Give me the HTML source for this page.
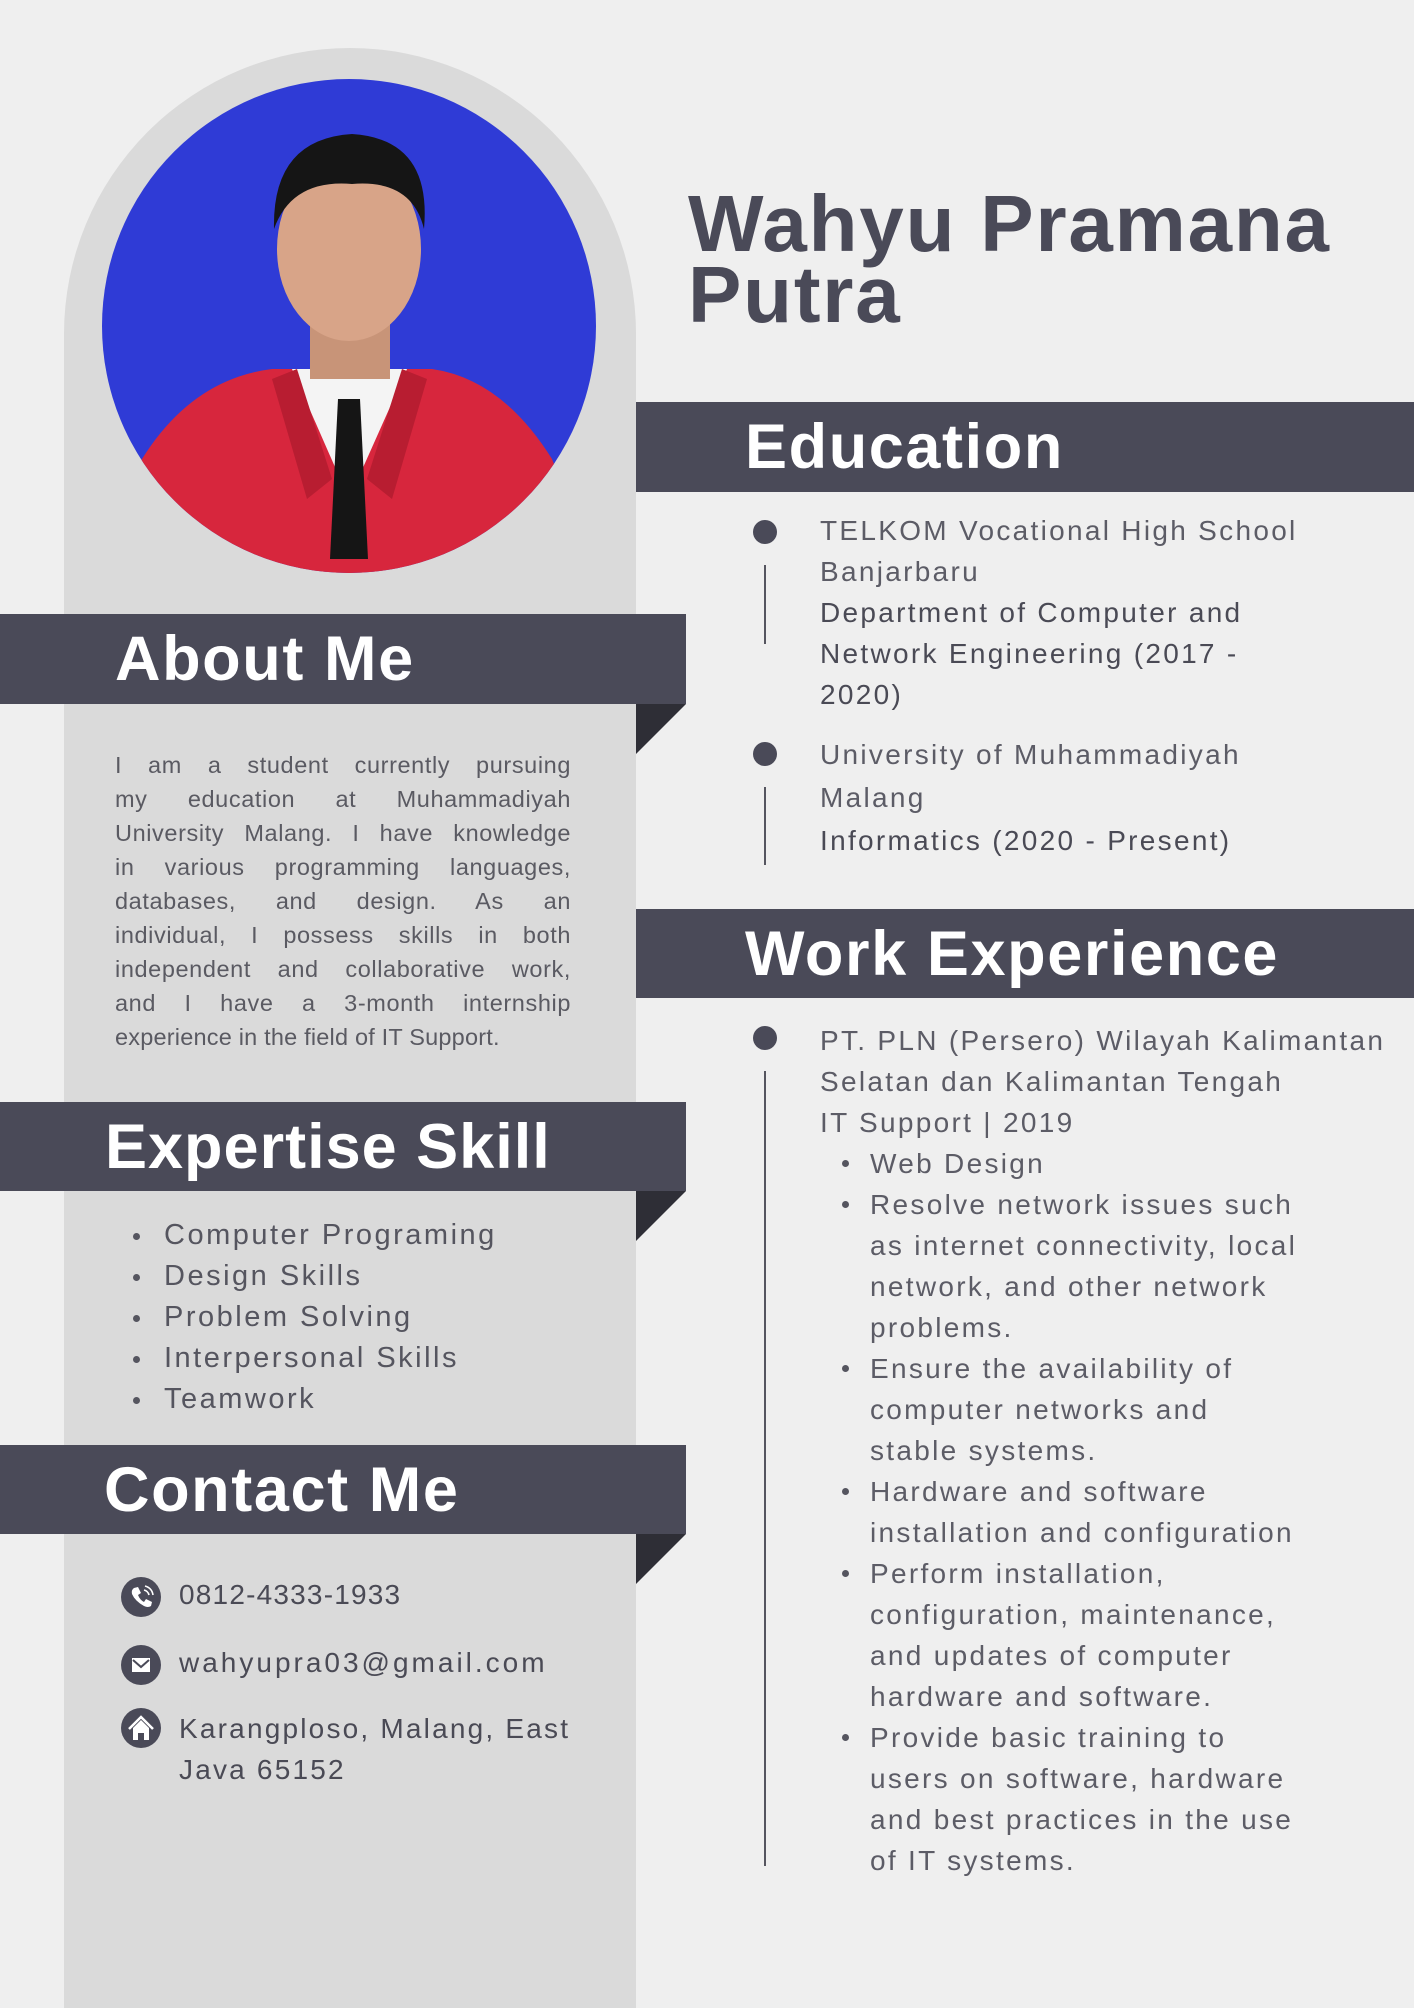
<!DOCTYPE html>
<html><head><meta charset="utf-8"><style>
*{margin:0;padding:0;box-sizing:border-box}
body{width:1414px;height:2000px;background:#efefef;position:relative;overflow:hidden;font-family:"Liberation Sans",Arial,sans-serif;color:#4a4a58}
.abs{position:absolute}
.panel{left:64px;top:48px;width:572px;height:1960px;background:#dadada;border-radius:286px 286px 0 0}
.band{position:absolute;background:#4a4a58;color:#fff;font-weight:bold;font-size:63px;display:flex;align-items:center;letter-spacing:1.6px}
.fold{position:absolute;width:0;height:0;border-top:50px solid #2e2e36;border-right:50px solid transparent}
.about{left:115px;top:748px;width:456px;font-size:23.5px;line-height:34px;color:#5a5a62;letter-spacing:0.6px}
.about div{text-align:justify;text-align-last:justify;white-space:nowrap}
.about div.l{text-align-last:left;letter-spacing:0.2px}
.skills{left:133px;top:1215px;font-size:29px;line-height:41px;color:#55555f;letter-spacing:2.5px}
.skills div::before{content:"";position:absolute;left:0;width:7px;height:7px;border-radius:50%;background:#55555f;margin-top:18px}
.skills div{padding-left:31px;position:relative}
.ct{font-size:28px;color:#4a4a55;letter-spacing:3px}
.ic{position:absolute;width:40px;height:40px;border-radius:50%;background:#4a4a58}
.r{font-size:28px;line-height:41px;letter-spacing:2.3px}
.lt{color:#5c5c66}
.dk{color:#4a4a55}
.dot{position:absolute;width:24px;height:24px;border-radius:50%;background:#4a4a58}
.vl{position:absolute;width:2px;background:#55555f}
.wl div.b{position:relative;padding-left:50px}
.wl div.b::before{content:"";position:absolute;left:22px;top:17px;width:7px;height:7px;border-radius:50%;background:#55555f}
</style></head><body>
<div class="abs panel"></div>
<svg class="abs" style="left:102px;top:79px" width="494" height="494" viewBox="0 0 494 494">
<defs><clipPath id="c"><circle cx="247" cy="247" r="247"/></clipPath></defs>
<g clip-path="url(#c)">
<rect width="494" height="494" fill="#2f3bd6"/>
<path d="M0 494 L40 380 Q90 300 170 290 L330 290 Q400 300 450 380 L494 494Z" fill="#d7263d"/>
<path d="M190 290 L247 420 L305 290Z" fill="#f4f4f4"/>
<path d="M236 320 L258 320 L266 480 L228 480Z" fill="#151515"/>
<path d="M195 290 L230 400 L205 420 L170 300Z" fill="#b81d31"/>
<path d="M300 290 L265 400 L290 420 L325 300Z" fill="#b81d31"/>
<rect x="208" y="220" width="80" height="80" fill="#c89478"/>
<ellipse cx="247" cy="170" rx="72" ry="92" fill="#d8a488"/>
<path d="M172 150 Q170 60 250 55 Q330 60 322 150 Q310 100 250 105 Q190 100 172 150Z" fill="#151515"/>
</g></svg>

<div class="band" style="left:0;top:614px;width:686px;height:90px;padding-left:115px">About Me</div>
<div class="fold" style="left:636px;top:704px"></div>
<div class="abs about">
<div>I am a student currently pursuing</div>
<div>my education at Muhammadiyah</div>
<div>University Malang. I have knowledge</div>
<div>in various programming languages,</div>
<div>databases, and design. As an</div>
<div>individual, I possess skills in both</div>
<div>independent and collaborative work,</div>
<div>and I have a 3-month internship</div>
<div class="l">experience in the field of IT Support.</div>
</div>

<div class="band" style="left:0;top:1102px;width:686px;height:89px;padding-left:105px;letter-spacing:1px">Expertise Skill</div>
<div class="fold" style="left:636px;top:1191px"></div>
<div class="abs skills">
<div>Computer Programing</div><div>Design Skills</div><div>Problem Solving</div><div>Interpersonal Skills</div><div>Teamwork</div>
</div>

<div class="band" style="left:0;top:1445px;width:686px;height:89px;padding-left:104px">Contact Me</div>
<div class="fold" style="left:636px;top:1534px"></div>
<div class="ic" style="left:121px;top:1577px"><svg width="40" height="40" viewBox="0 0 40 40"><path d="M13 11 l4 -1 l3 6 l-3 2 q2 5 6 7 l2 -3 l6 3 l-1 4 q-3 2 -7 0 q-9 -5 -12 -12 q-1 -4 2 -6z" fill="#fff"/><path d="M23 13 q4 1 5 5 M24 9 q7 2 8 9" stroke="#fff" stroke-width="1.6" fill="none"/></svg></div>
<div class="abs ct" style="left:179px;top:1579px;letter-spacing:1.2px">0812-4333-1933</div>
<div class="ic" style="left:121px;top:1645px"><svg width="40" height="40" viewBox="0 0 40 40"><rect x="11" y="13" width="18" height="14" fill="#fff"/><path d="M12 15 L20 22 L28 15" stroke="#4a4a58" stroke-width="2" fill="none"/></svg></div>
<div class="abs ct" style="left:179px;top:1647px">wahyupra03@gmail.com</div>
<div class="ic" style="left:121px;top:1708px"><svg width="40" height="40" viewBox="0 0 40 40"><path d="M8 21 L20 9 L32 21" stroke="#fff" stroke-width="2.5" fill="none"/><path d="M12 20 L20 12 L28 20 L28 32 L23 32 L23 25 L17 25 L17 32 L12 32Z" fill="#fff"/></svg></div>
<div class="abs ct" style="left:179px;top:1708px;line-height:41px;letter-spacing:2.2px">Karangploso, Malang, East<br>Java 65152</div>

<div class="abs" style="left:688px;top:188px;font-size:80px;font-weight:bold;line-height:71px;color:#4a4a58;letter-spacing:1.8px">Wahyu Pramana<br>Putra</div>

<div class="band" style="left:636px;top:402px;width:778px;height:90px;padding-left:109px">Education</div>
<div class="dot" style="left:753px;top:520px"></div>
<div class="vl" style="left:764px;top:565px;height:79px"></div>
<div class="abs r" style="left:820px;top:510px"><div class="lt">TELKOM Vocational High School<br>Banjarbaru</div><div class="dk">Department of Computer and<br>Network Engineering (2017 -<br>2020)</div></div>
<div class="dot" style="left:753px;top:742px"></div>
<div class="vl" style="left:764px;top:787px;height:78px"></div>
<div class="abs r" style="left:820px;top:733px;line-height:43px"><div class="lt">University of Muhammadiyah<br>Malang</div><div class="dk">Informatics (2020 - Present)</div></div>

<div class="band" style="left:636px;top:909px;width:778px;height:89px;padding-left:109px">Work Experience</div>
<div class="dot" style="left:753px;top:1026px"></div>
<div class="vl" style="left:764px;top:1071px;height:795px"></div>
<div class="abs r wl lt" style="left:820px;top:1020px">
<div>PT. PLN (Persero) Wilayah Kalimantan<br>Selatan dan Kalimantan Tengah</div>
<div>IT Support | 2019</div>
<div class="b">Web Design</div>
<div class="b">Resolve network issues such<br>as internet connectivity, local<br>network, and other network<br>problems.</div>
<div class="b">Ensure the availability of<br>computer networks and<br>stable systems.</div>
<div class="b">Hardware and software<br>installation and configuration</div>
<div class="b">Perform installation,<br>configuration, maintenance,<br>and updates of computer<br>hardware and software.</div>
<div class="b">Provide basic training to<br>users on software, hardware<br>and best practices in the use<br>of IT systems.</div>
</div>
</body></html>
